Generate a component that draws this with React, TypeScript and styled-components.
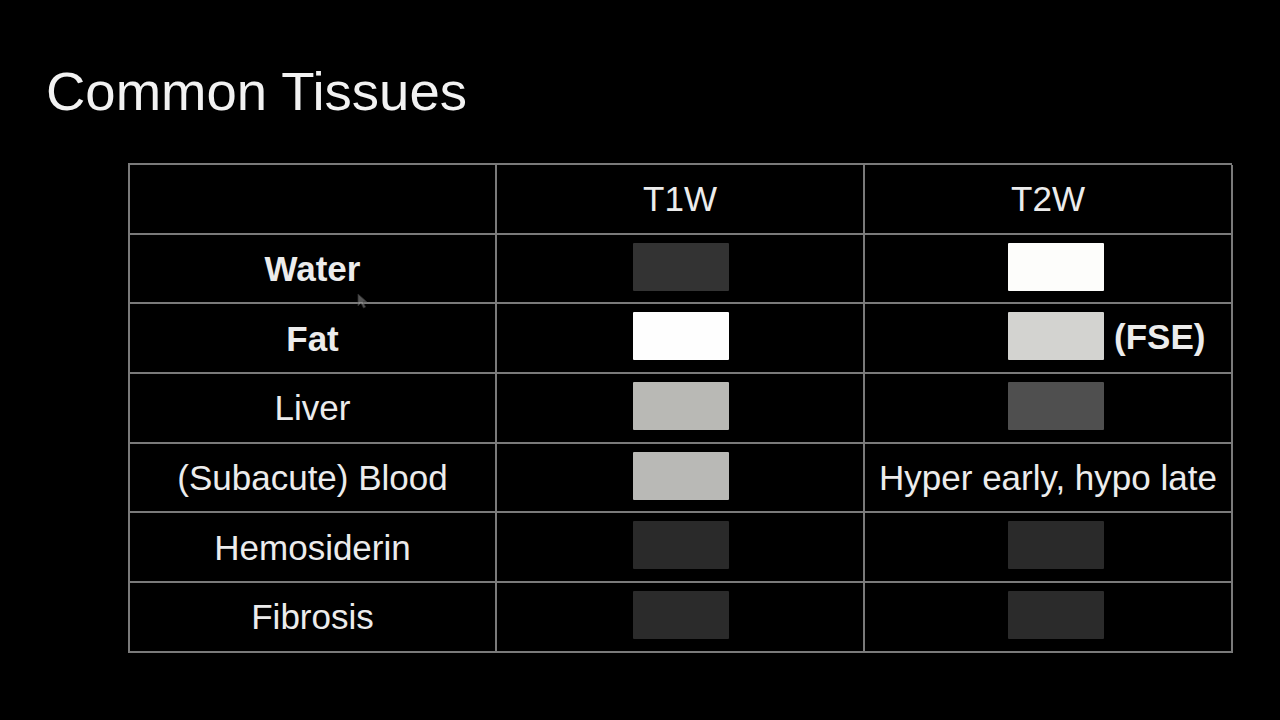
import React from 'react';
import styled, { createGlobalStyle } from 'styled-components';

const GlobalStyle = createGlobalStyle`
  html, body {
    margin: 0;
    padding: 0;
    background: #000;
  }
  body {
    font-family: "Liberation Sans", Arial, sans-serif;
  }
`;

// --- Styled Components ---

const Slide = styled.div`
  position: relative;
  width: 1280px;
  height: 720px;
  box-sizing: border-box;
  padding: 65px 0 0 46px;
  background: #000;
  overflow: hidden;
`;

const Title = styled.h1`
  margin: 0;
  font-size: 54.5px;
  line-height: 1;
  font-weight: 400;
  color: #f2f2f2;
`;

const Table = styled.div`
  position: relative;
  display: grid;
  grid-template-columns: 367px 368px 368px;
  grid-auto-rows: 69.7px;
  width: 1104px;
  margin: 43.5px 0 0 82px;
  border-top: 2px solid #7a7a7a;
  border-left: 2px solid #7a7a7a;
  box-sizing: border-box;
`;

const Cell = styled.div<{ $shifted?: boolean }>`
  display: flex;
  align-items: center;
  justify-content: ${(p) => (p.$shifted ? 'flex-start' : 'center')};
  padding-left: ${(p) => (p.$shifted ? '141px' : '0')};
  box-sizing: border-box;
  border-right: 2px solid #7a7a7a;
  border-bottom: 2px solid #7a7a7a;
  color: #ececec;
  font-size: 35px;
  font-weight: 400;
`;

const Label = styled.span<{ $bold?: boolean }>`
  margin-top: 1px;
  font-weight: ${(p) => (p.$bold ? 700 : 400)};
  white-space: nowrap;
`;

const Swatch = styled.div<{ $tone: string }>`
  width: 96px;
  height: 48px;
  margin: -4px 0 0 2px;
  background: ${(p) => p.$tone};
  border-radius: 1px;
`;

const Note = styled.span`
  margin-left: 10px;
  margin-top: -2px;
  font-weight: 700;
  font-size: 35px;
  color: #ececec;
`;

const Cursor = styled.svg`
  position: absolute;
  left: 227px;
  top: 128px;
  opacity: 0.55;
`;

type Entry = { kind: 'swatch'; tone: string; note?: string } | { kind: 'text'; text: string };

interface Tissue {
  name: string;
  bold?: boolean;
  t1: Entry;
  t2: Entry;
}

const tissues: Tissue[] = [
  { name: 'Water', bold: true, t1: { kind: 'swatch', tone: '#333333' }, t2: { kind: 'swatch', tone: '#fdfdfb' } },
  { name: 'Fat', bold: true, t1: { kind: 'swatch', tone: '#fefefe' }, t2: { kind: 'swatch', tone: '#d3d3d0', note: '(FSE)' } },
  { name: 'Liver', t1: { kind: 'swatch', tone: '#b9b9b5' }, t2: { kind: 'swatch', tone: '#4f4f4f' } },
  { name: '(Subacute) Blood', t1: { kind: 'swatch', tone: '#b9b9b6' }, t2: { kind: 'text', text: 'Hyper early, hypo late' } },
  { name: 'Hemosiderin', t1: { kind: 'swatch', tone: '#2a2a2a' }, t2: { kind: 'swatch', tone: '#2a2a2a' } },
  { name: 'Fibrosis', t1: { kind: 'swatch', tone: '#2b2b2b' }, t2: { kind: 'swatch', tone: '#2b2b2b' } },
];

const EntryCell = ({ entry, shifted }: { entry: Entry; shifted?: boolean }) => {
  if (entry.kind === 'text') {
    return (
      <Cell>
        <Label>{entry.text}</Label>
      </Cell>
    );
  }
  return (
    <Cell $shifted={shifted}>
      <Swatch $tone={entry.tone} />
      {entry.note && <Note>{entry.note}</Note>}
    </Cell>
  );
};

// --- Component ---

export default function App() {
  return (
    <>
      <GlobalStyle />
      <Slide>
        <Title>Common Tissues</Title>
        <Table>
          <Cell />
          <Cell>
            <Label>T1W</Label>
          </Cell>
          <Cell>
            <Label>T2W</Label>
          </Cell>

          {tissues.map((t) => (
            <React.Fragment key={t.name}>
              <Cell>
                <Label $bold={t.bold}>{t.name}</Label>
              </Cell>
              <EntryCell entry={t.t1} />
              <EntryCell entry={t.t2} shifted />
            </React.Fragment>
          ))}

          {/* pointer left over the slide */}
          <Cursor width="12" height="16" viewBox="0 0 12 16">
            <path d="M1 1 L1 13 L4 10 L6.5 15 L8.5 14 L6 9 L10 9 Z" fill="#9a9a9a" stroke="#555" strokeWidth="0.8" />
          </Cursor>
        </Table>
      </Slide>
    </>
  );
}
